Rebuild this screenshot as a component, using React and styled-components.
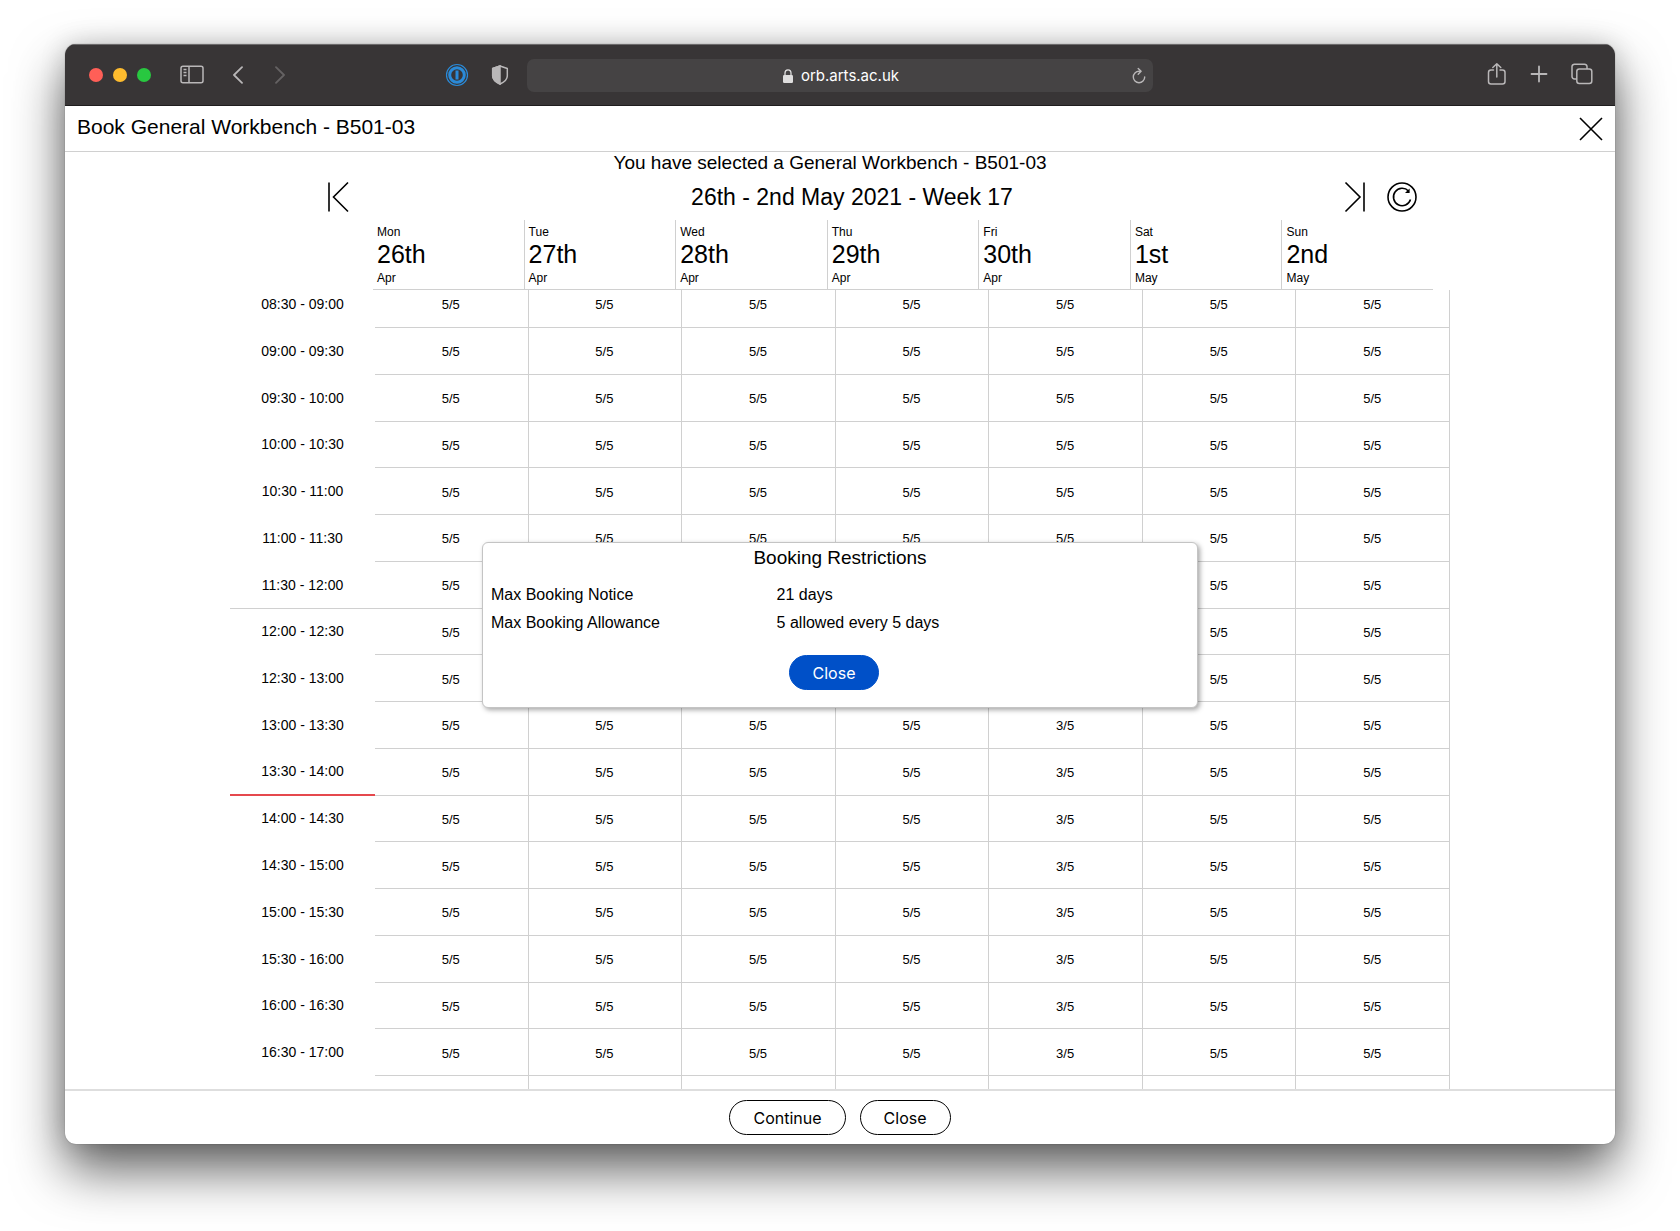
import styled, { createGlobalStyle, css } from "styled-components";

const GlobalStyle = createGlobalStyle`
  :root {
    --Line: #d0d0d0;
    --Chrome: #383536;
    --Chrome-field: #454344;
    --Chrome-icon: #b9b7b8;
    --Blue: #0050c8;
    --Red: #e5484d;
  }

  * {
    box-sizing: border-box;
  }

  body {
    margin: 0;
    background: #fff;
    color: #000;
    font-family: "Liberation Sans", Arial, sans-serif;
  }

  h1, h2, p, dl, dd {
    margin: 0;
    font-weight: 400;
  }
`;

const mixinBareButton = css`
  display: flex;
  align-items: center;
  justify-content: center;
  padding: 0;
  border: none;
  background: none;
  color: inherit;
  cursor: pointer;

  svg {
    display: block;
    fill: none;
    stroke: currentColor;
  }
`;

const Desktop = styled.div`
  display: flex;
  min-height: 100vh;
  padding: 44px 65px 87px;
`;

const Window = styled.div`
  display: flex;
  flex-direction: column;
  flex: 1;
  min-width: 0;
  border-radius: 11px;
  overflow: hidden;
  background: #fff;
  box-shadow: 0 0 1px rgba(0, 0, 0, 0.5), 0 26px 52px rgba(0, 0, 0, 0.62),
    0 0 26px rgba(0, 0, 0, 0.16);
`;

/* Browser toolbar */

const Toolbar = styled.header`
  display: grid;
  grid-template-columns: 1fr minmax(200px, 626px) 1fr;
  align-items: center;
  height: 62px;
  background: var(--Chrome);
  border-top: 1px solid #6c6a6b;
  border-bottom: 1px solid #1f1d1e;
  color: var(--Chrome-icon);
`;

const ToolbarSide = styled.div`
  display: flex;
  align-items: center;
  justify-content: ${({ $end }) => ($end ? "flex-end" : "flex-start")};
  gap: ${({ $end }) => ($end ? "23px" : "0")};
  padding: ${({ $end }) => ($end ? "0 22px" : "0 18px 0 24px")};
`;

const Lights = styled.div`
  display: flex;
  gap: 10px;
  margin-right: 29px;
`;

const Light = styled.button`
  width: 14px;
  height: 14px;
  padding: 0;
  border: none;
  border-radius: 50%;
  background: ${({ $color }) => $color};
`;

const ToolButton = styled.button`
  ${mixinBareButton}
  opacity: ${({ disabled }) => (disabled ? 0.35 : 1)};
`;

const History = styled.div`
  display: flex;
  gap: 30px;
  margin: 0 auto 0 28px;
`;

const Extensions = styled.div`
  display: flex;
  align-items: center;
  gap: 22px;
`;

const AddressBar = styled.div`
  display: grid;
  grid-template-columns: 1fr auto 1fr;
  align-items: center;
  height: 33px;
  padding: 2px 7px 0 9px;
  border-radius: 7px;
  background: var(--Chrome-field);
`;

const Address = styled.a`
  display: flex;
  grid-column: 2;
  align-items: center;
  gap: 8px;
  color: #fff;
  font: 15px/20px Inter, sans-serif;
  text-decoration: none;

  svg {
    fill: #dedddd;
  }
`;

const ReloadButton = styled(ToolButton)`
  justify-self: end;
`;

/* Page */

const Page = styled.div`
  position: relative;
  display: flex;
  flex-direction: column;
  flex: 1;
`;

const PageHeader = styled.div`
  display: flex;
  align-items: center;
  justify-content: space-between;
  height: 46px;
  padding: 0 12px;
  border-bottom: 1px solid var(--Line);
`;

const PageTitle = styled.h1`
  font-size: 21px;
  line-height: 42px;
  align-self: flex-start;
`;

const IconButton = styled.button`
  ${mixinBareButton}
`;

const Planner = styled.main`
  display: flex;
  flex-direction: column;
  flex: 1;
  width: 100%;
  max-width: 1220px;
  margin: 0 auto;
`;

const Selection = styled.p`
  padding-right: 20px;
  font-size: 19px;
  line-height: 22px;
  text-align: center;
`;

const WeekNav = styled.div`
  display: flex;
  align-items: center;
  height: 46px;
  padding: 0 32px 0 97px;
`;

const WeekTitle = styled.h2`
  flex: 1;
  padding-left: 10px;
  font-size: 23px;
  line-height: 28px;
  text-align: center;
`;

const NavActions = styled.div`
  display: flex;
  gap: 19px;
`;

const Schedule = styled.table`
  display: flex;
  flex-direction: column;
  flex: 1;
`;

const DayRow = styled.tr`
  display: flex;
  padding-right: 17px;
`;

const Corner = styled.td`
  flex: 0 0 143px;
  padding: 0;
`;

const DayCell = styled.th`
  display: flex;
  flex-direction: column;
  flex: 1 1 0;
  height: 70px;
  padding: 5px 4px 0;
  border-bottom: 1px solid var(--Line);
  font-size: 12px;
  font-weight: 400;
  line-height: 14px;
  text-align: left;

  & + & {
    border-left: 1px solid var(--Line);
  }
`;

const DayNumber = styled.span`
  margin-bottom: 2px;
  font-size: 25px;
  line-height: 30px;
`;

const SlotRows = styled.tbody`
  display: flex;
  flex-direction: column;
  flex: 1;
`;

const SlotRow = styled.tr`
  display: flex;
  flex: 1 0 auto;
  min-height: 40px;
`;

const lineStyles = {
  grey: "1px solid var(--Line)",
  red: "2px solid var(--Red)",
};

const TimeCell = styled.th`
  display: flex;
  align-items: center;
  justify-content: center;
  flex: 0 0 145px;
  padding: 0;
  border-bottom: ${({ $line }) => lineStyles[$line] || "1px solid transparent"};
  font-size: 14px;
  font-weight: 400;
`;

const SlotCell = styled.td`
  display: flex;
  align-items: center;
  justify-content: center;
  flex: 1 1 0;
  padding: 2px 1px 0 0;
  border-right: 1px solid var(--Line);
  border-bottom: 1px solid var(--Line);
  font-size: 13px;
`;

/* the row that is scrolled half under the day header */
const FirstSlotRow = styled(SlotRow)`
  flex: 0 0 38px;
  min-height: 0;

  th,
  td {
    padding-bottom: 10px;
  }
`;

const LastSlotRow = styled(SlotRow)`
  flex: 0 0 13px;
  min-height: 0;

  td {
    border-bottom: none;
  }
`;

const PageFooter = styled.footer`
  display: flex;
  align-items: center;
  justify-content: center;
  gap: 14px;
  height: 55px;
  border-top: 2px solid #dedede;
`;

const PillButton = styled.button`
  height: 35px;
  padding: 0 23px;
  border: 1px solid ${({ $primary }) => ($primary ? "var(--Blue)" : "#000")};
  border-radius: 18px;
  background: ${({ $primary }) => ($primary ? "var(--Blue)" : "#fff")};
  color: ${({ $primary }) => ($primary ? "#fff" : "#000")};
  font: 16px/20px Inter, sans-serif;
  cursor: pointer;
`;

/* Restrictions dialog */

const Overlay = styled.div`
  position: absolute;
  inset: 0;
  display: flex;
  align-items: center;
  justify-content: center;
`;

const Dialog = styled.section`
  display: flex;
  flex-direction: column;
  width: 716px;
  max-width: 90%;
  padding: 3px 0 17px;
  border: 1px solid #c4c4c4;
  border-radius: 6px;
  background: #fff;
  box-shadow: 2px 2px 5px rgba(0, 0, 0, 0.35);
`;

const DialogTitle = styled.h2`
  font-size: 19px;
  line-height: 24px;
  text-align: center;
`;

const Restrictions = styled.dl`
  display: grid;
  grid-template-columns: 2fr 3fr;
  margin: 11px 0 18px;
  font-size: 16px;
  line-height: 28px;

  dt,
  dd {
    padding-left: 8px;
  }
`;

const DialogActions = styled.div`
  display: flex;
  justify-content: center;
  padding-right: 12px;
`;

const days = [
  ["Mon", "26th", "Apr"],
  ["Tue", "27th", "Apr"],
  ["Wed", "28th", "Apr"],
  ["Thu", "29th", "Apr"],
  ["Fri", "30th", "Apr"],
  ["Sat", "1st", "May"],
  ["Sun", "2nd", "May"],
];

const free = ["5/5", "5/5", "5/5", "5/5", "5/5", "5/5", "5/5"];
const busyFriday = ["5/5", "5/5", "5/5", "5/5", "3/5", "5/5", "5/5"];

const slots = [
  { time: "08:30 - 09:00", places: free },
  { time: "09:00 - 09:30", places: free },
  { time: "09:30 - 10:00", places: free },
  { time: "10:00 - 10:30", places: free },
  { time: "10:30 - 11:00", places: free },
  { time: "11:00 - 11:30", places: free },
  { time: "11:30 - 12:00", places: free, line: "grey" },
  { time: "12:00 - 12:30", places: free },
  { time: "12:30 - 13:00", places: free },
  { time: "13:00 - 13:30", places: busyFriday },
  { time: "13:30 - 14:00", places: busyFriday, line: "red" },
  { time: "14:00 - 14:30", places: busyFriday },
  { time: "14:30 - 15:00", places: busyFriday },
  { time: "15:00 - 15:30", places: busyFriday },
  { time: "15:30 - 16:00", places: busyFriday },
  { time: "16:00 - 16:30", places: busyFriday },
  { time: "16:30 - 17:00", places: busyFriday },
];

const BrowserToolbar = () => (
  <Toolbar>
    <ToolbarSide>
      <Lights>
        <Light $color="#ff5f57" aria-label="Close window" />
        <Light $color="#febc2e" aria-label="Minimise window" />
        <Light $color="#28c840" aria-label="Zoom window" />
      </Lights>
      <ToolButton aria-label="Sidebar">
        <svg width="24" height="20" strokeWidth="1.5">
          <rect x="1" y="1.2" width="22" height="16.5" rx="2" />
          <path d="M9 1.2v16.5M3.5 4.5h3M3.5 7.5h3M3.5 10.5h3" />
        </svg>
      </ToolButton>
      <History>
        <ToolButton aria-label="Back">
          <svg width="12" height="18" strokeWidth="1.8" strokeLinecap="round">
            <path d="M10 1.2L2 9l8 7.8" strokeLinejoin="round" />
          </svg>
        </ToolButton>
        <ToolButton aria-label="Forward" disabled>
          <svg width="12" height="18" strokeWidth="1.8" strokeLinecap="round">
            <path d="M2 1.2L10 9l-8 7.8" strokeLinejoin="round" />
          </svg>
        </ToolButton>
      </History>
      <Extensions>
        <ToolButton aria-label="Password manager">
          <svg width="24" height="24" style={{ color: "#2a8ad8" }}>
            <circle cx="12" cy="12" r="10.5" strokeWidth="1.2" />
            <circle cx="12" cy="12" r="7.3" strokeWidth="3" />
            <path d="M12 7.5v9" strokeWidth="3" />
          </svg>
        </ToolButton>
        <ToolButton aria-label="Privacy report">
          <svg width="18" height="20" strokeWidth="1.5">
            <path
              d="M9 1L16.300 3.500V11c0 3.500-3 6-7.300 8-4.300-2-7.300-4.500-7.300-8V3.500z"
              strokeLinejoin="round"
            />
            <path
              d="M9 1L1.700 3.500V11c0 3.500 3 6 7.300 8z"
              fill="currentColor"
            />
          </svg>
        </ToolButton>
      </Extensions>
    </ToolbarSide>
    <AddressBar>
      <Address href="#">
        <svg width="10" height="14">
          <rect y="6" width="10" height="8" rx="1.2" />
          <path
            d="M2 7V4a3 3.200 0 0 1 6 0v3"
            fill="none"
            stroke="#dedddd"
            strokeWidth="1.3"
          />
        </svg>
        orb.arts.ac.uk
      </Address>
      <ReloadButton aria-label="Reload">
        <svg width="14" height="18" strokeWidth="1.4" strokeLinecap="round">
          <path d="M12.700 10a5.700 5.700 0 1 1-5.700-5.700h1.500" />
          <path d="M6.200 1.500l2.900 2.800-2.900 2.900" strokeLinejoin="round" />
        </svg>
      </ReloadButton>
    </AddressBar>
    <ToolbarSide $end>
      <ToolButton aria-label="Share">
        <svg width="20" height="26" strokeWidth="1.5" strokeLinecap="round">
          <path d="M6.500 8H4a2.500 2.500 0 0 0-2.500 2.500v9A2.500 2.500 0 0 0 4 22h11.500a2.500 2.500 0 0 0 2.500-2.500v-9A2.500 2.500 0 0 0 15.500 8H13" />
          <path d="M9.800 15V1.800M5.800 5.500l4-3.800 4 3.800" strokeLinejoin="round" />
        </svg>
      </ToolButton>
      <ToolButton aria-label="New tab">
        <svg width="18" height="20" strokeWidth="1.8" strokeLinecap="round">
          <path d="M9 1.500v15M1.500 9h15" />
        </svg>
      </ToolButton>
      <ToolButton aria-label="Tab overview">
        <svg width="22" height="24" strokeWidth="1.5">
          <rect x="5.800" y="6" width="15" height="14.5" rx="2.5" />
          <path d="M5.800 16H3.500A2.500 2.500 0 0 1 1 13.500v-10A2.500 2.500 0 0 1 3.500 1.300h10A2.500 2.500 0 0 1 16 3.500V6" />
        </svg>
      </ToolButton>
    </ToolbarSide>
  </Toolbar>
);

const WeekNavigation = () => (
  <WeekNav>
    <IconButton aria-label="Previous week">
      <svg width="24" height="32" strokeWidth="1.6">
        <path d="M2 1.500v29M21 1.500L6.500 16 21 30.500" />
      </svg>
    </IconButton>
    <WeekTitle>26th - 2nd May 2021 - Week 17</WeekTitle>
    <NavActions>
      <IconButton aria-label="Next week">
        <svg width="24" height="32" strokeWidth="1.6">
          <path d="M21 1.500v29M2.500 1.500L17 16 2.500 30.500" />
        </svg>
      </IconButton>
      <IconButton aria-label="Refresh">
        <svg width="32" height="32" strokeWidth="1.6">
          <circle cx="16" cy="16" r="14" />
          <path d="M24.500 18.500A8.700 8.700 0 1 1 22.500 10" />
          <path d="M23.600 7.500v4.600h-4.600z" fill="currentColor" stroke="none" />
        </svg>
      </IconButton>
    </NavActions>
  </WeekNav>
);

const ScheduleTable = () => (
  <Schedule>
    <thead>
      <DayRow>
        <Corner />
        {days.map(([name, number, month]) => (
          <DayCell key={number} scope="col">
            {name}
            <DayNumber>{number}</DayNumber>
            {month}
          </DayCell>
        ))}
      </DayRow>
    </thead>
    <SlotRows>
      {slots.map(({ time, places, line }, index) => {
        const Row = index === 0 ? FirstSlotRow : SlotRow;
        return (
          <Row key={time}>
            <TimeCell scope="row" $line={line}>
              {time}
            </TimeCell>
            {places.map((place, day) => (
              <SlotCell key={days[day][1]}>{place}</SlotCell>
            ))}
          </Row>
        );
      })}
      <LastSlotRow>
        <TimeCell as="td" />
        {days.map(([, number]) => (
          <SlotCell key={number} />
        ))}
      </LastSlotRow>
    </SlotRows>
  </Schedule>
);

const RestrictionsDialog = () => (
  <Overlay>
    <Dialog role="dialog" aria-labelledby="restrictions-title">
      <DialogTitle id="restrictions-title">Booking Restrictions</DialogTitle>
      <Restrictions>
        <dt>Max Booking Notice</dt>
        <dd>21 days</dd>
        <dt>Max Booking Allowance</dt>
        <dd>5 allowed every 5 days</dd>
      </Restrictions>
      <DialogActions>
        <PillButton $primary>Close</PillButton>
      </DialogActions>
    </Dialog>
  </Overlay>
);

const App = () => {
  return (
    <>
      <GlobalStyle />
      <Desktop>
        <Window>
          <BrowserToolbar />
          <Page>
            <PageHeader>
              <PageTitle>Book General Workbench - B501-03</PageTitle>
              <IconButton aria-label="Close booking">
                <svg width="24" height="24" strokeWidth="1.6">
                  <path d="M1 1l22 22M23 1L1 23" />
                </svg>
              </IconButton>
            </PageHeader>
            <Planner>
              <Selection>
                You have selected a General Workbench - B501-03
              </Selection>
              <WeekNavigation />
              <ScheduleTable />
            </Planner>
            <PageFooter>
              <PillButton>Continue</PillButton>
              <PillButton>Close</PillButton>
            </PageFooter>
            <RestrictionsDialog />
          </Page>
        </Window>
      </Desktop>
    </>
  );
};

export default App;
